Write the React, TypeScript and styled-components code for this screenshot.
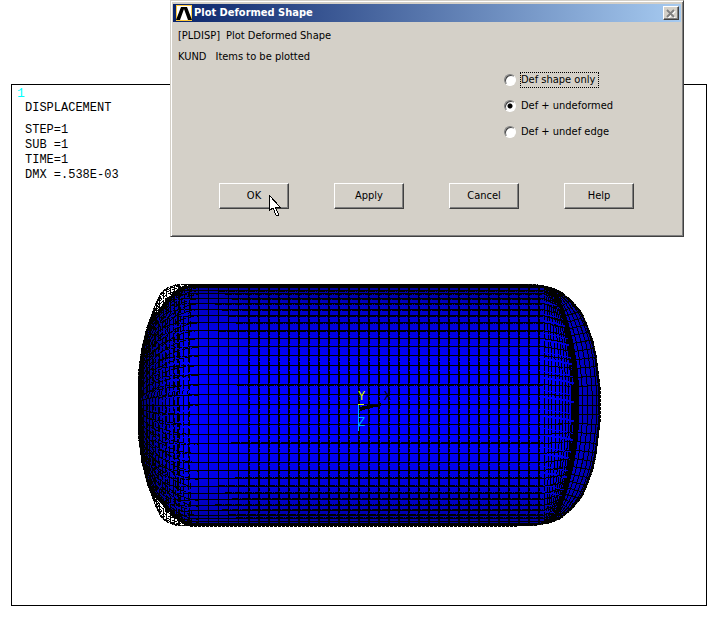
import React, { useState } from "react";
import styled, { createGlobalStyle } from "styled-components";

const GlobalStyle = createGlobalStyle`
  * { box-sizing: border-box; }
  body {
    margin: 0;
    background: #fff;
    color: #000;
    font: 11px/14px "DejaVu Sans Condensed", "Noto Sans", sans-serif;
  }
`;

const Page = styled.main`
  position: relative;
  padding: 84px 13px 13px 11px;
`;

const Plot = styled.section`
  padding: 1px 5px 77px;
  border: 1px solid #000;
  font: 12px/15px "Liberation Mono", monospace;
`;

const WindowNumber = styled.div`
  color: #00ffff;
  font-size: 13px;
`;

const Heading = styled.h1`
  margin: 0 0 7px 8px;
  font: inherit;
`;

const Stats = styled.pre`
  margin: 0 0 0 8px;
  font: inherit;
`;

const Model = styled.svg`
  display: block;
  margin: 100px 0 0 121px;
`;

const Dialog = styled.form`
  position: absolute;
  top: 0;
  left: 170px;
  right: 36px;
  height: 237px;
  padding: 0 2px 2px;
  background: #d4d0c8;
  border: 1px solid #d4d0c8;
  border-right-color: #404040;
  border-bottom-color: #404040;
  box-shadow: inset 1px 1px #fff, inset -1px -1px #808080;
`;

const TitleBar = styled.header`
  display: flex;
  align-items: center;
  gap: 2px;
  height: 18px;
  margin: 3px 0 0;
  padding: 0 2px 0 3px;
  color: #fff;
  font-weight: bold;
  background: linear-gradient(90deg, #0a246a, #a6caf0);
`;

const Title = styled.h2`
  flex: 1;
  margin: 0;
  font: inherit;
`;

const CloseButton = styled.button`
  display: grid;
  place-items: center;
  width: 16px;
  height: 14px;
  padding: 0;
  background: #d4d0c8;
  border: 1px solid;
  border-color: #fff #404040 #404040 #fff;
  box-shadow: inset -1px -1px #808080;
`;

const Line = styled.p<{ $gap: number }>`
  display: flex;
  gap: ${(p) => p.$gap}px;
  margin: 7px 5px 0;
`;

const Options = styled.fieldset`
  display: flex;
  flex-direction: column;
  align-items: flex-start;
  gap: 10px;
  width: 177px;
  margin: 8px 0 0 auto;
  padding: 0;
  border: 0;
`;

const Option = styled.label`
  display: flex;
  align-items: center;
  gap: 4px;
`;

const Radio = styled.input`
  appearance: none;
  width: 12px;
  height: 12px;
  margin: 0;
  border: 1px solid;
  border-color: #808080 #fff #fff #808080;
  border-radius: 50%;
  outline: 0;
  background: #fff;
  box-shadow: inset 1px 1px #404040;
  &:checked {
    background: radial-gradient(circle, #000 2px, #fff 3px);
  }
`;

const OptionText = styled.span<{ $focused: boolean }>`
  height: 16px;
  padding: 0 3px 0 0;
  border: 1px ${(p) => (p.$focused ? "dotted #000" : "solid transparent")};
`;

const Actions = styled.footer`
  display: flex;
  justify-content: space-between;
  margin: 43px 47px 0 46px;
`;

const ActionButton = styled.button`
  width: 70px;
  height: 26px;
  padding: 0;
  color: #000;
  font: inherit;
  background: #d4d0c8;
  border: 1px solid;
  border-color: #fff #404040 #404040 #fff;
  box-shadow: inset -1px -1px #808080;
`;

const Pointer = styled.svg`
  position: absolute;
  top: 193px;
  left: 97px;
  pointer-events: none;
`;

type Point = [number, number];

const CY = 122;
const STEP = Math.PI / 38;

const lerp = (table: Point[], v: number) => {
  for (let i = 1; i < table.length; i++) {
    const [a, b] = [table[i - 1], table[i]];
    if (v <= b[0]) return a[1] + ((b[1] - a[1]) * (v - a[0])) / (b[0] - a[0]);
  }
  return table[table.length - 1][1];
};

/* Half height against x, for both ends of the vessel. */
const leftRadius: Point[] = [[0, 18], [1, 36], [4, 58], [9, 78], [15, 94], [19, 104], [23, 112], [29, 117], [37, 120], [52, 121]];
const bentRadius: Point[] = [[0, 18], [1, 36], [4, 58], [9, 76], [15, 88], [20, 93], [25, 98], [31, 106], [40, 114], [50, 119], [60, 121]];
/* x against half height, for the right end. */
const rightEdge: Point[] = [[0, 462], [18, 462], [34, 460], [50, 458], [64, 455], [78, 450], [92, 444], [104, 434], [114, 422], [118, 411], [120, 400], [121, 380]];

const path = (pts: Point[]) => "M" + pts.map(([x, y]) => `${x.toFixed(2)} ${y.toFixed(2)}`).join("L");

const body = (table: Point[]) => {
  const top: Point[] = table.map(([x, r]) => [x, CY - r]);
  const right: Point[] = [...rightEdge].reverse().map(([r, x]) => [x, CY - r]);
  const half = [...top, ...right];
  const lower = [...half].reverse().map(([x, y]): Point => [x, 2 * CY - y]);
  return path([...half, ...lower]) + "Z";
};

const rows = Array.from({ length: 39 }, (_, i) => Math.sin((i - 19) * STEP));

const meridian = (table: Point[], s: number, from = 1, to = 52) => {
  const pts: Point[] = [];
  for (let x = from; x <= to; x += 3) pts.push([x, CY + lerp(table, x) * s]);
  return path(pts);
};

const bow = (a: number) => Math.pow(Math.max(0, Math.cos(a)), 1.6);

const ring = (x: number, r: number, bulge: number) => {
  const pts: Point[] = [];
  for (let i = -19; i <= 19; i++) pts.push([x + bulge * bow(i * STEP), CY + r * Math.sin(i * STEP)]);
  return path(pts);
};

const capPoint = (i: number, t: number): Point => {
  const a = i * STEP;
  const s = Math.abs(Math.sin(a));
  const inner: Point = [416 + 23 * bow(a), 112 * s];
  const outer: Point = [lerp(rightEdge, 119 * s), 119 * s];
  const r = inner[1] + (outer[1] - inner[1]) * t;
  return [inner[0] + (outer[0] - inner[0]) * t, CY + Math.sign(a) * r];
};

const capRing = (t: number) => path(Array.from({ length: 39 }, (_, i) => capPoint(i - 19, t)));

const band = () => {
  const inner: Point[] = [];
  const outer: Point[] = [];
  for (let i = -19; i <= 19; i++) {
    const [x, y] = capPoint(i, 0);
    const half = 1 + 1.5 * Math.cos(i * STEP);
    inner.push([x - half, y]);
    outer.unshift([x + half, y]);
  }
  return path([...inner, ...outer]) + "Z";
};

const leftRings = [3, 5, 8, 11, 14, 17, 20, 24, 27, 31, 35, 39, 40, 45, 50];
const rightRings = [[406, 121, 1], [408, 120, 3], [409, 120, 5], [410, 119, 8], [411, 118, 11], [412, 117, 13], [413, 116, 15], [414, 115, 17], [415, 114, 19], [415, 113, 21]];

const Vessel = () => (
  <Model width="465" height="245" viewBox="0 0 465 245" shapeRendering="crispEdges" role="img" aria-label="Deformed mesh">
    <defs>
      <linearGradient id="shade" x1="0" x2="0" y1="0" y2="1">
        <stop offset="0" stopColor="#000090" />
        <stop offset="0.07" stopColor="#0000bc" />
        <stop offset="0.2" stopColor="#0000e4" />
        <stop offset="0.34" stopColor="#0000ff" />
        <stop offset="0.66" stopColor="#0000ff" />
        <stop offset="0.8" stopColor="#0000e4" />
        <stop offset="0.93" stopColor="#0000bc" />
        <stop offset="1" stopColor="#000090" />
      </linearGradient>
      <linearGradient id="ends" x1="0" x2="1" y1="0" y2="0">
        <stop offset="0" stopColor="#000030" stopOpacity="0.7" />
        <stop offset="0.05" stopColor="#000040" stopOpacity="0.4" />
        <stop offset="0.1" stopColor="#000060" stopOpacity="0" />
        <stop offset="0.9" stopColor="#000060" stopOpacity="0" />
        <stop offset="0.95" stopColor="#000060" stopOpacity="0.3" />
        <stop offset="1" stopColor="#000040" stopOpacity="0.5" />
      </linearGradient>
      <clipPath id="outline"><path d={body(leftRadius)} /></clipPath>
    </defs>
    <path d={body(bentRadius)} fill="url(#shade)" />
    <path d={body(bentRadius)} fill="url(#ends)" />
    <g clipPath="url(#outline)" fill="none" stroke="#000">
      {rows.map((s, i) => {
        const y = Math.round(CY + 121 * s) - 0.5;
        const edge = Math.abs(i - 19);
        const wide = (edge > 7 && edge < 16) || i === 17 || i === 23;
        return (
          <g key={i}>
            <path d={`M50 ${y}H405`} />
            {wide && <path d={`M${76 + ((i * 7) % 24)} ${y + (s < 0 ? 1 : -1)}H405`} strokeDasharray="7 1 1 1" />}
            <path d={meridian(leftRadius, s)} strokeDasharray="5 1" />
            <path d={meridian(bentRadius, s, 3, 60)} strokeDasharray="7 2" />
            <path d={path([[405, y], capPoint(i - 19, 0)])} strokeDasharray="6 1" />
            <path d={path([[404, y], [424, CY + 116 * s]])} strokeDasharray="4 2" />
            <path d={path([capPoint(i - 19, 0), capPoint(i - 19, 1)])} />
          </g>
        );
      })}
      {Array.from({ length: 35 }, (_, i) => {
        const x = 60 + i * 10;
        return (
          <g key={x}>
            <path d={`M${x + 0.5} 1V243`} />
            {x >= 110 && <path d={`M${x + 1.5} 1V243`} strokeDasharray="8 1 3 1" />}
          </g>
        );
      })}
      {leftRings.map((x, i) => (
        <g key={x}>
          <path d={ring(x + 2, lerp(leftRadius, x + 2), -2)} strokeDasharray={x < 12 ? "none" : "9 1 4 2"} />
          {i % 2 === 0 && <path d={ring(x + 4, lerp(bentRadius, x + 4), -3)} strokeDasharray="6 3" />}
        </g>
      ))}
      {rightRings.map(([x, r, b]) => (
        <path key={b} d={ring(x, r, b)} strokeDasharray="11 1 5 2" strokeWidth={b === 19 ? 2 : 1} />
      ))}
      {[0.24, 0.46, 0.66, 0.84].map((t) => (
        <path key={t} d={capRing(t)} />
      ))}
      <path d={band()} fill="#000" stroke="none" />
      <path d={body(bentRadius)} strokeWidth="4" strokeDasharray="9 1" />
      <path d={path([...rightEdge].map(([r, x]): Point => [x, CY - r]))} strokeWidth="3" />
      <path d={path([...rightEdge].map(([r, x]): Point => [x, CY + r]))} strokeWidth="3" />
      <path d={ring(4, 52, -3)} strokeWidth="4" />
      <path d="M50 2H405M50 242H405" strokeWidth="3" />
    </g>
    <path d={body(leftRadius)} fill="none" stroke="#000" strokeDasharray="3 1" />
    <path d="M221 124L243 120V123L232 125L222 128Z" />
    <path d="M220.5 121V148" stroke="#00a8ff" />
    <path d="M220 121.5H226" stroke="#d8ff00" />
    <g fontFamily="Liberation Mono, monospace" fontSize="12">
      <text x="220" y="117" fill="#d8ff00">Y</text>
      <text x="246" y="117" fill="#000">X</text>
      <text x="220" y="143" fill="#00a8ff">Z</text>
    </g>
  </Model>
);

const choices = ["Def shape only", "Def + undeformed", "Def + undef edge"];
const actions = ["OK", "Apply", "Cancel", "Help"];

export default function App() {
  const [selected, setSelected] = useState(1);
  return (
    <Page>
      <GlobalStyle />
      <Plot>
        <WindowNumber>1</WindowNumber>
        <Heading>DISPLACEMENT</Heading>
        <Stats>{"STEP=1\nSUB =1\nTIME=1\nDMX =.538E-03"}</Stats>
        <Vessel />
      </Plot>
      <Dialog role="dialog" aria-labelledby="dialog-title" onSubmit={(e) => e.preventDefault()}>
        <TitleBar>
          <svg width="16" height="16" viewBox="0 0 16 16" aria-hidden="true">
            <path d="M0 0H16V16H0Z" fill="#ffc93c" />
            <path d="M1 1H15V15H1Z" fill="#fff" />
            <path d="M0 15L5 2H11L16 15H12L8 4L4 15Z" fill="#000" />
          </svg>
          <Title id="dialog-title">Plot Deformed Shape</Title>
          <CloseButton type="button" aria-label="Close">
            <svg width="10" height="9" viewBox="0 0 10 9" fill="none" strokeWidth="2" aria-hidden="true">
              <path d="M2 2L9 9M9 2L2 9" stroke="#fff" />
              <path d="M1 1L8 8M8 1L1 8" stroke="#808080" />
            </svg>
          </CloseButton>
        </TitleBar>
        <Line $gap={6}><span>[PLDISP]</span><span>Plot Deformed Shape</span></Line>
        <Line $gap={9}><span>KUND</span><span>Items to be plotted</span></Line>
        <Options aria-label="Items to be plotted">
          {choices.map((text, i) => (
            <Option key={text}>
              <Radio type="radio" name="kund" checked={selected === i} onChange={() => setSelected(i)} />
              <OptionText $focused={i === 0}>{text}</OptionText>
            </Option>
          ))}
        </Options>
        <Actions>
          {actions.map((text) => (
            <ActionButton key={text} type="button">{text}</ActionButton>
          ))}
        </Actions>
        <Pointer width="13" height="23" viewBox="0 0 13 23" shapeRendering="crispEdges" aria-hidden="true">
          <path d="M1 1V17L5 14L8 21H10V19L7 13H12L1 1Z" fill="#fff" stroke="#000" />
        </Pointer>
      </Dialog>
    </Page>
  );
}
